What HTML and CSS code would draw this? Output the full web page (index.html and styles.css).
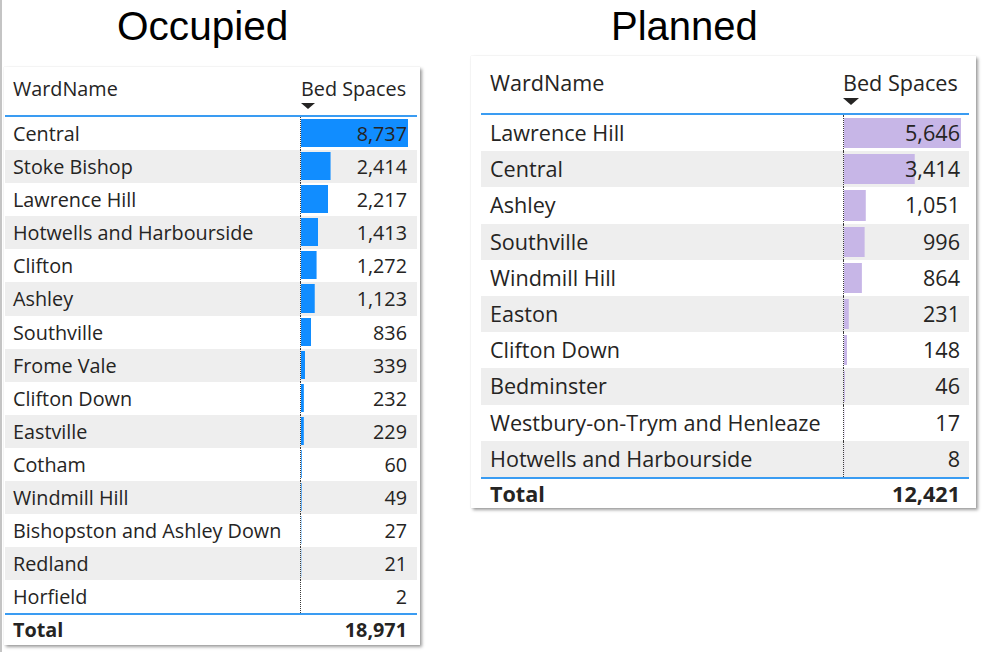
FILE: index.html
```html
<!DOCTYPE html>
<html lang="en">
<head>
<meta charset="utf-8">
<title>Bed Spaces</title>
<link rel="stylesheet" href="styles.css">
</head>
<body>
<div class="page">
  <section class="col col-occupied">
    <h1 class="title">Occupied</h1>
    <div class="card">
      <div class="thead">
        <div class="c-name">WardName</div>
        <div class="c-num"><span class="h-label">Bed Spaces</span><span class="sort"></span></div>
      </div>
      <div class="tbody">
        <div class="tr"><div class="c-name">Central</div><div class="c-num" style="--w:100%">8,737</div></div>
        <div class="tr"><div class="c-name">Stoke Bishop</div><div class="c-num" style="--w:27.63%">2,414</div></div>
        <div class="tr"><div class="c-name">Lawrence Hill</div><div class="c-num" style="--w:25.37%">2,217</div></div>
        <div class="tr"><div class="c-name">Hotwells and Harbourside</div><div class="c-num" style="--w:16.17%">1,413</div></div>
        <div class="tr"><div class="c-name">Clifton</div><div class="c-num" style="--w:14.56%">1,272</div></div>
        <div class="tr"><div class="c-name">Ashley</div><div class="c-num" style="--w:12.85%">1,123</div></div>
        <div class="tr"><div class="c-name">Southville</div><div class="c-num" style="--w:9.57%">836</div></div>
        <div class="tr"><div class="c-name">Frome Vale</div><div class="c-num" style="--w:3.88%">339</div></div>
        <div class="tr"><div class="c-name">Clifton Down</div><div class="c-num" style="--w:2.66%">232</div></div>
        <div class="tr"><div class="c-name">Eastville</div><div class="c-num" style="--w:2.62%">229</div></div>
        <div class="tr"><div class="c-name">Cotham</div><div class="c-num" style="--w:0.69%">60</div></div>
        <div class="tr"><div class="c-name">Windmill Hill</div><div class="c-num" style="--w:0.56%">49</div></div>
        <div class="tr"><div class="c-name">Bishopston and Ashley Down</div><div class="c-num" style="--w:0.31%">27</div></div>
        <div class="tr"><div class="c-name">Redland</div><div class="c-num" style="--w:0.24%">21</div></div>
        <div class="tr"><div class="c-name">Horfield</div><div class="c-num" style="--w:0.02%">2</div></div>
      </div>
      <div class="tfoot">
        <div class="c-name">Total</div>
        <div class="c-num">18,971</div>
      </div>
    </div>
  </section>
  <section class="col col-planned">
    <h1 class="title">Planned</h1>
    <div class="card">
      <div class="thead">
        <div class="c-name">WardName</div>
        <div class="c-num"><span class="h-label">Bed Spaces</span><span class="sort"></span></div>
      </div>
      <div class="tbody">
        <div class="tr"><div class="c-name">Lawrence Hill</div><div class="c-num" style="--w:100%">5,646</div></div>
        <div class="tr"><div class="c-name">Central</div><div class="c-num" style="--w:60.47%">3,414</div></div>
        <div class="tr"><div class="c-name">Ashley</div><div class="c-num" style="--w:18.62%">1,051</div></div>
        <div class="tr"><div class="c-name">Southville</div><div class="c-num" style="--w:17.64%">996</div></div>
        <div class="tr"><div class="c-name">Windmill Hill</div><div class="c-num" style="--w:15.3%">864</div></div>
        <div class="tr"><div class="c-name">Easton</div><div class="c-num" style="--w:4.09%">231</div></div>
        <div class="tr"><div class="c-name">Clifton Down</div><div class="c-num" style="--w:2.62%">148</div></div>
        <div class="tr"><div class="c-name">Bedminster</div><div class="c-num" style="--w:0.81%">46</div></div>
        <div class="tr"><div class="c-name">Westbury-on-Trym and Henleaze</div><div class="c-num" style="--w:0.3%">17</div></div>
        <div class="tr"><div class="c-name">Hotwells and Harbourside</div><div class="c-num" style="--w:0.14%">8</div></div>
      </div>
      <div class="tfoot">
        <div class="c-name">Total</div>
        <div class="c-num">12,421</div>
      </div>
    </div>
  </section>
</div>
</body>
</html>
```

FILE: styles.css
```css
* { box-sizing: border-box; }

html, body {
  margin: 0;
  padding: 0;
  background: #ffffff;
}

body {
  font-family: "Open Sans", "Noto Sans", "DejaVu Sans", sans-serif;
  color: #252423;
}

.page {
  display: flex;
  height: 652px;
  width: 1002px;
  border-left: 2px solid #c4c4c4;
  overflow: hidden;
}

.col {
  display: flex;
  flex-direction: column;
}

.title {
  margin: 3px 0 0 0;
  font-family: "Liberation Sans", Arial, sans-serif;
  font-weight: 400;
  font-size: 40px;
  line-height: 46px;
  color: #000000;
  white-space: nowrap;
}

.card {
  background: #ffffff;
  box-shadow: 2px 2px 3px rgba(0, 0, 0, 0.38), 0 0 1px rgba(0, 0, 0, 0.15);
}

.thead,
.tr,
.tfoot {
  display: flex;
}

.c-name {
  flex: 1 1 auto;
  white-space: nowrap;
}

.c-num {
  flex: 0 0 auto;
  text-align: right;
  white-space: nowrap;
}

.thead .c-num {
  display: flex;
  flex-direction: column;
  align-items: flex-start;
  text-align: left;
}

.sort {
  width: 0;
  height: 0;
  border-left: 7px solid transparent;
  border-right: 7px solid transparent;
  border-top: 6px solid #252423;
}

.tr:nth-child(even) {
  background-color: #eeeeee;
}

.tr .c-num {
  border-left: 1px dotted #3a3a3a;
  background-repeat: no-repeat;
}

.tfoot {
  font-weight: 700;
}

/* ---------- Occupied ---------- */
.col-occupied {
  width: 469px;
}

.col-occupied .title {
  padding-left: 115px;
  font-size: 40.6px;
}

.col-occupied .card {
  margin: 18px 0 0 2px;
  width: 416px;
  padding: 0 3px 0 1px;
  font-size: 19.8px;
}

.col-occupied .thead {
  height: 50px;
  padding-top: 8px;
  border-bottom: 2px solid #3a9cf2;
  line-height: 27px;
}

.col-occupied .sort {
  margin-top: 1px;
}

.col-occupied .c-name {
  padding-left: 8px;
}

.col-occupied .thead,
.col-occupied .tr,
.col-occupied .tfoot {
  padding-right: 9px;
}

.col-occupied .c-num {
  width: 108px;
  padding-right: 1px;
}

.col-occupied .thead .c-num {
  padding-left: 1px;
}

.col-occupied .tr {
  height: 33.1px;
  line-height: 34px;
}

.col-occupied .tr .c-num {
  background-image: linear-gradient(#118dff, #118dff);
  background-size: var(--w) calc(100% - 5px);
  background-position: left 0 top 2px;
}

.col-occupied .tfoot {
  height: 32px;
  border-top: 2px solid #3a9cf2;
  line-height: 30px;
}

/* ---------- Planned ---------- */
.col-planned .title {
  padding-left: 140px;
}

.col-planned .card {
  margin-top: 7px;
  width: 505px;
  padding: 0 7px 0 10px;
  font-size: 21.6px;
}

.col-planned .thead {
  height: 59px;
  padding-top: 12px;
  border-bottom: 2px solid #3a9cf2;
  line-height: 29px;
}

.col-planned .sort {
  margin-top: 1px;
  border-left-width: 8px;
  border-right-width: 8px;
  border-top-width: 7px;
}

.col-planned .c-name {
  padding-left: 9px;
}

.col-planned .thead,
.col-planned .tr,
.col-planned .tfoot {
  padding-right: 8px;
}

.col-planned .c-num {
  width: 118px;
  padding-right: 1px;
}

.col-planned .tr {
  height: 36.2px;
  line-height: 36px;
}

.col-planned .tr .c-num {
  background-image: linear-gradient(#c7b6e7, #c7b6e7);
  background-size: var(--w) calc(100% - 6px);
  background-position: left 0 top 3px;
}

.col-planned .tfoot {
  height: 31px;
  border-top: 2px solid #3a9cf2;
  line-height: 29px;
}
```
